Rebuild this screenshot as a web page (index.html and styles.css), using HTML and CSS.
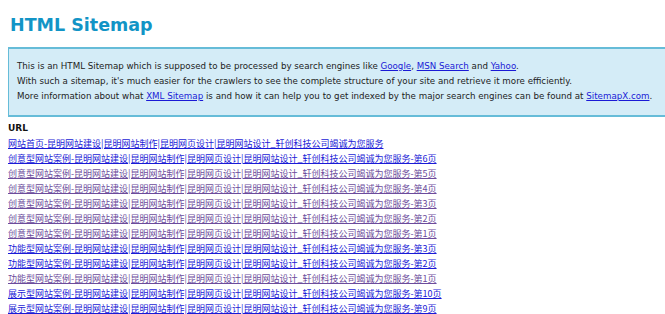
FILE: index.html
```html
<!DOCTYPE html>
<html lang="zh-CN">
<head>
  <meta charset="UTF-8" />
  <title>HTML Sitemap</title>
  <link rel="stylesheet" href="styles.css">
</head>
<body>
  <h1>HTML Sitemap</h1>

  <div class="intro">
    <p>This is an HTML Sitemap which is supposed to be processed by search engines like <a href="#">Google</a>, <a href="#">MSN Search</a> and <a href="#">Yahoo</a>.</p>
    <p>With such a sitemap, it's much easier for the crawlers to see the complete structure of your site and retrieve it more efficiently.</p>
    <p>More information about what <a href="#">XML Sitemap</a> is and how it can help you to get indexed by the major search engines can be found at <a href="#">SitemapX.com</a>.</p>
  </div>

  <h3>URL</h3>
  <ul class="urls">
    <li><a href="#">网站首页-昆明网站建设|昆明网站制作|昆明网页设计|昆明网站设计_轩创科技公司竭诚为您服务</a></li>
    <li><a href="#">创意型网站案例-昆明网站建设|昆明网站制作|昆明网页设计|昆明网站设计_轩创科技公司竭诚为您服务-第6页</a></li>
    <li><a class="visited" href="#">创意型网站案例-昆明网站建设|昆明网站制作|昆明网页设计|昆明网站设计_轩创科技公司竭诚为您服务-第5页</a></li>
    <li><a class="visited" href="#">创意型网站案例-昆明网站建设|昆明网站制作|昆明网页设计|昆明网站设计_轩创科技公司竭诚为您服务-第4页</a></li>
    <li><a class="visited" href="#">创意型网站案例-昆明网站建设|昆明网站制作|昆明网页设计|昆明网站设计_轩创科技公司竭诚为您服务-第3页</a></li>
    <li><a class="visited" href="#">创意型网站案例-昆明网站建设|昆明网站制作|昆明网页设计|昆明网站设计_轩创科技公司竭诚为您服务-第2页</a></li>
    <li><a class="visited" href="#">创意型网站案例-昆明网站建设|昆明网站制作|昆明网页设计|昆明网站设计_轩创科技公司竭诚为您服务-第1页</a></li>
    <li><a href="#">功能型网站案例-昆明网站建设|昆明网站制作|昆明网页设计|昆明网站设计_轩创科技公司竭诚为您服务-第3页</a></li>
    <li><a href="#">功能型网站案例-昆明网站建设|昆明网站制作|昆明网页设计|昆明网站设计_轩创科技公司竭诚为您服务-第2页</a></li>
    <li><a class="visited" href="#">功能型网站案例-昆明网站建设|昆明网站制作|昆明网页设计|昆明网站设计_轩创科技公司竭诚为您服务-第1页</a></li>
    <li><a href="#">展示型网站案例-昆明网站建设|昆明网站制作|昆明网页设计|昆明网站设计_轩创科技公司竭诚为您服务-第10页</a></li>
    <li><a href="#">展示型网站案例-昆明网站建设|昆明网站制作|昆明网页设计|昆明网站设计_轩创科技公司竭诚为您服务-第9页</a></li>
  </ul>
</body>
</html>
```

FILE: styles.css
```css
html {
  overflow: hidden;
}
body {
  font-family: "DejaVu Sans", Verdana, sans-serif;
  background: #ffffff;
  color: #222;
  margin: 0;
  padding: 8px 0 0 8px;
}
h1 {
  color: #1294c6;
  font-size: 17.5px;
  font-weight: bold;
  margin: 5px 0 10px 2px;
  line-height: 24px;
}
.intro {
  background: #d4ecf7;
  border-top: 2px solid #66bcd8;
  border-bottom: 2px solid #66bcd8;
  border-left: 1px solid #66bcd8;
  padding: 10px 0 11px 8px;
  font-size: 8.7px;
  line-height: 15px;
}
.intro p {
  margin: 0;
}
a {
  color: #1a1ad6;
}
h3 {
  font-size: 9px;
  margin: 4px 0 0 0;
  line-height: 15px;
  color: #111;
}
.urls {
  list-style: none;
  margin: 0;
  padding: 0;
  font-family: "Noto Sans CJK SC", sans-serif;
  font-size: 9px;
  line-height: 15px;
}
.urls a.visited {
  color: #6c4c9c;
}
```
